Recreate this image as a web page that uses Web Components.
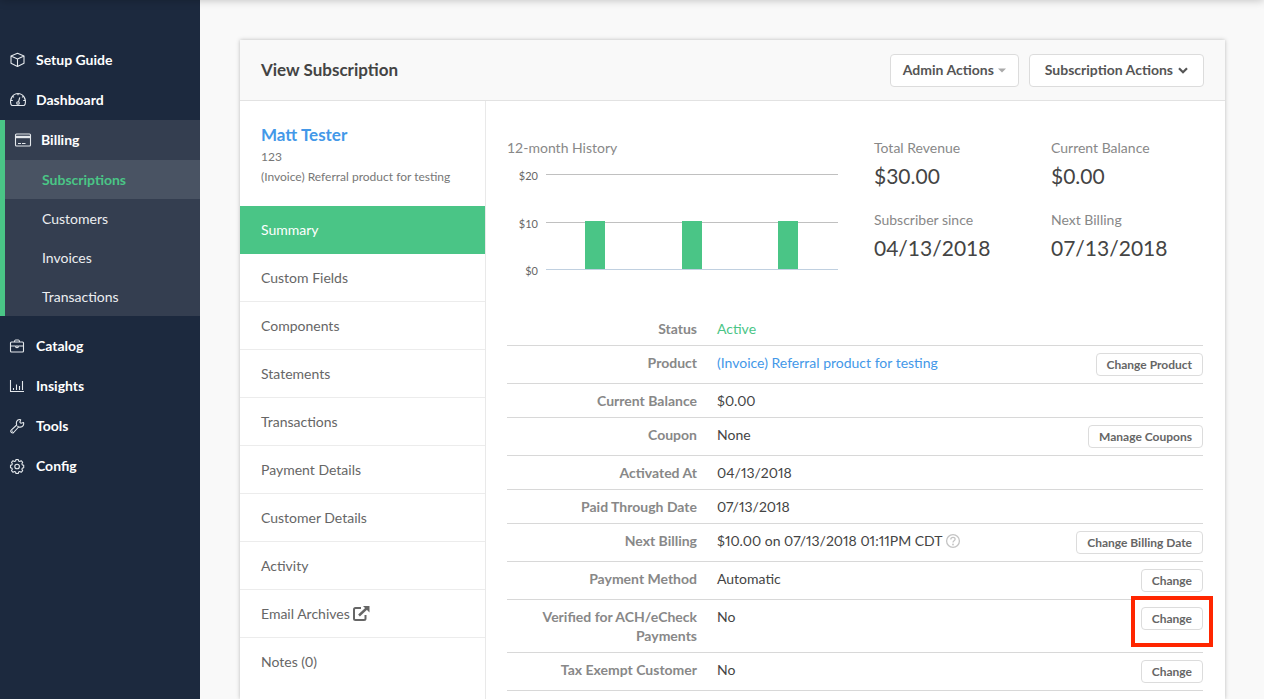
<!DOCTYPE html>
<html lang="en">
<head>
<meta charset="utf-8">
<meta name="viewport" content="width=device-width, initial-scale=1">
<title>View Subscription</title>
<style>
  html, body { margin: 0; min-height: 100%; }
  body { background: #f9f9f9; color: #444; font: 14px/20px Lato, "Liberation Sans", sans-serif; }
</style>
</head>
<body>
<billing-app>
  <app-sidebar slot="sidebar"></app-sidebar>
  <subscription-card>
    <span slot="title">View Subscription</span>
    <action-button slot="actions" size="large" caret="triangle">Admin Actions</action-button>
    <action-button slot="actions" size="large" caret="chevron">Subscription Actions</action-button>
    <customer-nav slot="nav" name="Matt Tester" reference="123" product="(Invoice) Referral product for testing"></customer-nav>
    <history-chart slot="chart"></history-chart>
    <stat-figure slot="stats" label="Total Revenue">$30.00</stat-figure>
    <stat-figure slot="stats" label="Current Balance">$0.00</stat-figure>
    <stat-figure slot="stats" label="Subscriber since">04/13/2018</stat-figure>
    <stat-figure slot="stats" label="Next Billing">07/13/2018</stat-figure>
    <detail-table slot="details"></detail-table>
  </subscription-card>
</billing-app>

<script>
class Base extends HTMLElement {
  constructor() {
    super();
    this.attachShadow({ mode: 'open' });
  }
  connectedCallback() {
    const t = document.createElement('template');
    t.innerHTML = this.render();
    this.shadowRoot.replaceChildren(t.content.cloneNode(true));
  }
}

customElements.define('billing-app', class extends Base {
  render() {
    return `
<style>
  :host { display: grid; grid-template-columns: 200px minmax(0, 1fr); min-height: 100vh; position: relative; overflow: hidden; }
  :host::before { content: ""; position: absolute; z-index: 2; top: -10px; left: 0; right: 0; height: 10px; box-shadow: 0 0 10px rgba(0,0,0,.25); }
  main { padding: 40px 39px 0 40px; display: grid; }
</style>
<slot name="sidebar"></slot>
<main><slot></slot></main>`;
  }
});

const ICONS = {
  box: '<path d="M8.5 1.2 15 3.9v7.3l-6.5 3.3L2 11.2V3.9zM2 3.9l6.5 3 6.5-3M8.5 6.9v7.6"/>',
  gauge: '<path d="M3.500 13.500h11c.8 0 1.300-.4 1.600-1.200C17.600 7 14 1.500 9 1.500S.4 7 1.900 12.300c.3.800.8 1.200 1.600 1.200zM2 8.500h1.800M14.200 8.500H16M3.800 4.400l1.200 1M9 1.500v1.800M14.200 4.400l-1.200 1"/><path d="M10.800 5.300 9.500 9.800"/><circle cx="9" cy="11" r="1.300"/>',
  card: '<rect x="1.500" y="2" width="15" height="12" rx="1"/><path d="M2 5h14" stroke-width="2.400"/><path d="M4 11.500h3M8 11.500h3.500"/>',
  case: '<rect x="1.500" y="4" width="13" height="10" rx="1"/><path d="M5.500 4c0-1.500.3-2 1-2h3c.7 0 1 .5 1 2M1.500 8H6m4 0h4.500M6.500 8h3c0 1-.7 1.700-1.500 1.700S6.500 9 6.500 8z"/>',
  bars: '<path d="M1.500 2v11.500H15M4.500 12v-2M7.500 12V6.500M10.500 12V8M13.500 12V3"/>',
  wrench: '<path d="M14.500 4.500 12 5.300 10.800 4.200l.9-2.500C9.500.8 7 2.800 7.400 5.600L7.700 7l-5.500 5.200c-1.300 1.600.9 3.700 2.400 2.300L9.600 9l1.600.1c2.700-.1 4-2.400 3.300-4.600z"/><path d="m8.500 8 1 1M3 12.800l.7.700"/>',
  gear: '<path d="m7 1.500-.4 1.500-1.100.5-1.500-.8-1.500 1.600.8 1.500-.4 1.100-1.400.4v2.400l1.400.4.4 1.100-.8 1.500L4 14.300l1.500-.8 1.100.5.400 1.500h2.200l.4-1.500 1.100-.5 1.500.8 1.500-1.600-.8-1.500.4-1.100 1.400-.4V7.300l-1.400-.4-.4-1.100.8-1.500-1.500-1.600-1.500.8-1.100-.5-.4-1.500z"/><circle cx="8.100" cy="8.500" r="2.300"/>'
};

customElements.define('nav-icon', class extends Base {
  render() {
    return `
<style>
  :host { display: block; width: 18px; height: 16px; }
  svg { display: block; fill: none; stroke: #e4e8ec; stroke-width: 1.1; stroke-linejoin: round; }
</style>
<svg width="18" height="16" viewBox="0 0 18 16" aria-hidden="true">${ICONS[this.getAttribute('name')]}</svg>`;
  }
});

customElements.define('app-sidebar', class extends Base {
  render() {
    const top = (icon, text) => `<li><a class="top" href="#"><nav-icon name="${icon}"></nav-icon>${text}</a></li>`;
    return `
<style>
  :host { display: block; background: #1c293e; }
  nav { padding-top: 40px; }
  ul { list-style: none; margin: 0; padding: 0; }
  a { display: flex; align-items: center; color: #fff; text-decoration: none; }
  .top { height: 40px; padding-left: 9px; gap: 9px; font-weight: 700; }
  .group { background: #343e50; border-left: 5px solid #4ac586; margin-bottom: 10px; }
  .sub a { height: 39px; padding-left: 37px; color: #eceef0; }
  .sub li:first-child a { background: #495363; color: #4ac586; font-weight: 700; }
</style>
<nav><ul>
  ${top('box', 'Setup Guide')}${top('gauge', 'Dashboard')}
  <li class="group"><a class="top" href="#"><nav-icon name="card"></nav-icon>Billing</a>
    <ul class="sub">${['Subscriptions', 'Customers', 'Invoices', 'Transactions'].map(t => `<li><a href="#">${t}</a></li>`).join('')}</ul></li>
  ${top('case', 'Catalog')}${top('bars', 'Insights')}${top('wrench', 'Tools')}${top('gear', 'Config')}
</ul></nav>`;
  }
});

customElements.define('action-button', class extends Base {
  render() {
    const carets = {
      triangle: '<svg width="8" height="5" viewBox="0 0 8 5"><path d="M0 .5h8L4 4.500z" fill="#aaa"/></svg>',
      chevron: '<svg width="10" height="7" viewBox="0 0 10 7"><path d="m1 1.200 4 4 4-4" fill="none" stroke="#555" stroke-width="2.200"/></svg>'
    };
    return `
<style>
  :host { display: inline-block; }
  button { display: flex; align-items: center; box-sizing: border-box; height: 23px; padding: 0 10px; font: 700 12px/20px Lato, sans-serif;
    color: #666; background: #fff; border: 1px solid #dcdcdc; border-radius: 4px; white-space: nowrap; cursor: pointer; }
  :host([size=large]) button { height: 33px; padding: 0 12px; font-size: 14px; gap: 4px; color: #555; }
  :host([caret=chevron]) button { padding: 0 15px; gap: 5px; }
</style>
<button type="button"><slot></slot>${carets[this.getAttribute('caret')] || ''}</button>`;
  }
});

customElements.define('subscription-card', class extends Base {
  render() {
    return `
<style>
  :host { display: grid; grid-template-rows: auto 1fr; background: #fff; box-shadow: 0 0 4px rgba(0,0,0,.25); }
  header { display: flex; align-items: center; justify-content: space-between; height: 60px; padding: 0 21px; background: #f9f9f9; border-bottom: 1px solid #e2e2e2; }
  h1 { margin: 0; font-size: 17px; line-height: 24px; font-weight: 700; color: #444; }
  .actions { display: flex; gap: 10px; }
  .body { display: grid; grid-template-columns: 246px minmax(0, 1fr); }
  .content { padding: 37px 22px 0 21px; }
  .overview { display: grid; grid-template-columns: 367fr 329fr; margin-bottom: 30px; }
  .stats { display: grid; grid-template-columns: 177fr 152fr; gap: 16px 0; align-content: start; }
</style>
<header><h1><slot name="title"></slot></h1><div class="actions"><slot name="actions"></slot></div></header>
<div class="body">
  <slot name="nav"></slot>
  <section class="content">
    <div class="overview"><slot name="chart"></slot><div class="stats"><slot name="stats"></slot></div></div>
    <slot name="details"></slot>
  </section>
</div>`;
  }
});

customElements.define('customer-nav', class extends Base {
  render() {
    const ext = '<svg width="17" height="15" viewBox="0 0 17 15" aria-hidden="true"><path d="M8 2H2.500C1.500 2 1 2.500 1 3.500v9c0 1 .5 1.500 1.500 1.500H11c1 0 1.500-.5 1.500-1.500V9" fill="none" stroke="#666" stroke-width="2"/><path d="M6 9.500 14 2" stroke="#666" stroke-width="2.400"/><path d="M10 0h6.500v6.500z" fill="#666"/></svg>';
    const items = ['Summary', 'Custom Fields', 'Components', 'Statements', 'Transactions', 'Payment Details', 'Customer Details', 'Activity', 'Email Archives', 'Notes (0)'];
    return `
<style>
  :host { display: block; border-right: 1px solid #e9e9e9; }
  .who { padding: 22px 21px 20px; color: #777; font-size: 12px; }
  h2 { margin: 0; font-size: 17px; line-height: 24px; }
  a { color: #4398e8; text-decoration: none; }
  p { margin: 0; line-height: 19px; }
  .ref { line-height: 20px; }
  ul { list-style: none; margin: 0; padding: 0; }
  li a { display: flex; align-items: center; gap: 3px; box-sizing: border-box; height: 48px; padding: 0 21px; color: #666; border-bottom: 1px solid #ececec; }
  li:first-child a { background: #4ac586; color: #fff; border-color: #4ac586; }
  li:last-child a { border-color: transparent; }
</style>
<div class="who"><h2><a href="#">${this.getAttribute('name')}</a></h2><p class="ref">${this.getAttribute('reference')}</p><p>${this.getAttribute('product')}</p></div>
<nav><ul>${items.map(t => `<li><a href="#">${t}${t === 'Email Archives' ? ext : ''}</a></li>`).join('')}</ul></nav>`;
  }
});

customElements.define('stat-figure', class extends Base {
  render() {
    return `
<style>
  :host { display: block; }
  .label { color: #888; }
  .value { font-size: 21px; line-height: 36px; color: #444; }
</style>
<div class="label">${this.getAttribute('label')}</div><div class="value"><slot></slot></div>`;
  }
});

customElements.define('history-chart', class extends Base {
  render() {
    return `
<style>
  :host { display: block; }
  .title { color: #888; }
  svg { display: block; }
  text { font: 11px Lato, sans-serif; fill: #666; text-anchor: end; }
</style>
<div class="title">12-month History</div>
<svg width="332" height="124" viewBox="0 0 332 124" role="img" aria-label="12-month History">
  <g stroke="#c0c0c0"><path d="M39 16.500h292M39 64.500h292"/></g>
  <g fill="#4ac586"><rect x="78" y="63" width="20" height="48"/><rect x="175" y="63" width="20" height="48"/><rect x="271" y="63" width="20" height="48"/></g>
  <path d="M39 111.500h292" stroke="#c0d0e0"/>
  <text x="31" y="22">$20</text><text x="31" y="70">$10</text><text x="31" y="117">$0</text>
</svg>`;
  }
});

const DETAILS = [
  ['Status', '<span class="active">Active</span>'],
  ['Product', '<a href="#">(Invoice) Referral product for testing</a>', 'Change Product'],
  ['Current Balance', '$0.00'],
  ['Coupon', 'None', 'Manage Coupons'],
  ['Activated At', '04/13/2018'],
  ['Paid Through Date', '07/13/2018'],
  ['Next Billing', '$10.00 on 07/13/2018 01:11PM CDT<svg class="help" width="16" height="16" viewBox="0 0 16 16" aria-hidden="true"><g fill="none" stroke="#c4c4c4" stroke-width="1.300"><circle cx="8" cy="8" r="6.400"/><path d="M5.800 6.500c.1-2.900 4.400-2.700 4.300-.2C10 7.900 8 7.700 8 9.500"/></g><circle cx="8" cy="11.500" r=".9" fill="#c4c4c4"/></svg>', 'Change Billing Date'],
  ['Payment Method', 'Automatic', 'Change'],
  ['Verified for ACH/eCheck Payments', 'No', 'Change', true],
  ['Tax Exempt Customer', 'No', 'Change']
];

customElements.define('detail-table', class extends Base {
  render() {
    const rows = DETAILS.map(([label, value, action, marked]) => `<tr><th scope="row">${label}</th><td>${value}</td>
      <td class="act">${action ? `<div${marked ? ' class="marked"' : ''}><action-button>${action}</action-button></div>` : ''}</td></tr>`).join('');
    return `
<style>
  :host { display: block; }
  table { width: 100%; border-collapse: separate; border-spacing: 0; line-height: 19px; }
  th, td { padding: 7px 0; border-bottom: 1px solid #d8d8d8; vertical-align: top; text-align: left; }
  th { box-sizing: border-box; width: 210px; padding-right: 20px; padding-left: 20px; text-align: right; color: #888; font-weight: 700; }
  td { color: #444; font-variant-numeric: proportional-nums; }
  .act { width: 130px; }
  .act div { display: flex; justify-content: flex-end; width: max-content; margin-left: auto; position: relative; }
  .marked::after { content: ""; position: absolute; inset: -11px -10px -17px; border: 4px solid #ff2600; pointer-events: none; }
  a { color: #4398e8; text-decoration: none; }
  .active { color: #4ac586; }
  .help { vertical-align: -3px; margin-left: 2px; }
</style>
<table><tbody>${rows}</tbody></table>`;
  }
});
</script>
</body>
</html>
